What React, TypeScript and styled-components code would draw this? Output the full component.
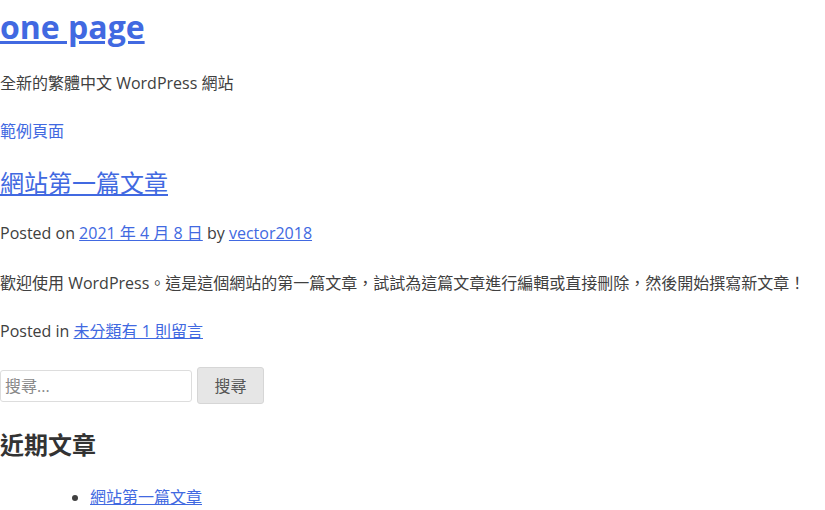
import React from 'react';
import styled, { createGlobalStyle } from 'styled-components';

const GlobalStyle = createGlobalStyle`
    html, body {
        margin: 0;
        padding: 0;
        background: #fff;
    }
    body {
        font-family: "Open Sans", "Noto Sans CJK TC", sans-serif;
        font-size: 16px;
        line-height: 24px;
        color: #404040;
    }
`;

const Page = styled.div`
    display: flex;
    flex-direction: column;
`;

const SiteTitle = styled.h1`
    margin: 3px 0 0;
    font-size: 32px;
    line-height: 48px;
    font-weight: 700;
    a {
        color: #4169e1;
    }
`;

const Para = styled.p<{ $top?: number }>`
    margin: ${(p) => p.$top ?? 24}px 0 0;
`;

const Link = styled.a<{ $plain?: boolean }>`
    color: #4169e1;
    text-decoration: ${(p) => (p.$plain ? 'none' : 'underline')};
`;

const PostTitle = styled.h2<{ $bold?: boolean; $top?: number }>`
    margin: ${(p) => p.$top ?? 22}px 0 0;
    font-size: 24px;
    line-height: 36px;
    font-weight: ${(p) => (p.$bold ? 700 : 400)};
    color: #333;
    a {
        color: #4169e1;
    }
`;

const SearchForm = styled.form`
    display: flex;
    align-items: center;
    gap: 5px;
    margin: 24px 0 0;
`;

const SearchInput = styled.input`
    box-sizing: border-box;
    width: 192px;
    height: 32px;
    padding: 0 4px;
    border: 1px solid #ddd;
    border-radius: 3px;
    font: inherit;
    color: #404040;
    &::placeholder {
        color: #888;
    }
`;

const SearchButton = styled.button`
    box-sizing: border-box;
    width: 67px;
    height: 37px;
    border: 1px solid #d6d6d6;
    border-radius: 3px;
    background: #e6e6e6;
    font: inherit;
    color: #555;
`;

const RecentList = styled.ul`
    margin: 22px 0 0;
    padding-left: 90px;
`;

export default function App() {
    return (
        <Page>
            <GlobalStyle />
            <SiteTitle>
                <a href="#">one page</a>
            </SiteTitle>
            <Para $top={20}>全新的繁體中文 WordPress 網站</Para>
            <Para>
                <Link href="#" $plain>範例頁面</Link>
            </Para>
            <PostTitle>
                <a href="#">網站第一篇文章</a>
            </PostTitle>
            <Para $top={20}>
                Posted on <Link href="#">2021 年 4 月 8 日</Link> by <Link href="#">vector2018</Link>
            </Para>
            <Para $top={26}>歡迎使用 WordPress。這是這個網站的第一篇文章，試試為這篇文章進行編輯或直接刪除，然後開始撰寫新文章！</Para>
            <Para>
                Posted in <Link href="#">未分類</Link><Link href="#">有 1 則留言</Link>
            </Para>
            <SearchForm onSubmit={(e) => e.preventDefault()}>
                <SearchInput type="search" placeholder="搜尋..." />
                <SearchButton type="submit">搜尋</SearchButton>
            </SearchForm>
            <PostTitle $bold $top={23}>近期文章</PostTitle>
            <RecentList>
                <li>
                    <Link href="#">網站第一篇文章</Link>
                </li>
            </RecentList>
        </Page>
    );
}
